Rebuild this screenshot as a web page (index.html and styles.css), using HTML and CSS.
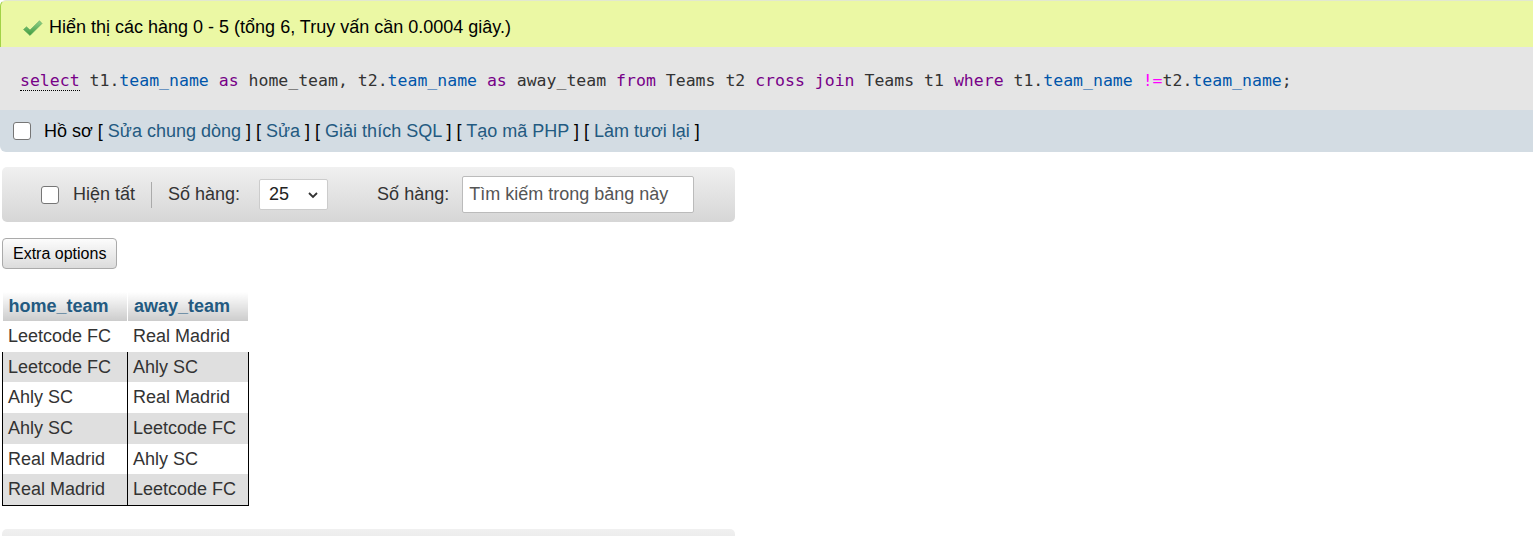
FILE: index.html
```html
<!DOCTYPE html>
<html lang="vi">
<head>
<meta charset="utf-8">
<title>SQL result</title>
<link rel="stylesheet" href="styles.css">
</head>
<body>
<div class="result">
  <div class="success">
    <svg class="check" width="21" height="18" viewBox="0 0 21 18">
      <defs>
        <linearGradient id="g" x1="0" y1="0" x2="0" y2="1">
          <stop offset="0" stop-color="#8fd08a"/>
          <stop offset="1" stop-color="#3f9a3c"/>
        </linearGradient>
      </defs>
      <path d="M1.5 10.5 L4.5 7.8 L8 11 L17.5 1.8 L20 4.5 L8 16.5 Z" fill="url(#g)" stroke="#5aa85a" stroke-width="0.6" stroke-linejoin="round"/>
    </svg>
    <span>Hiển thị các hàng 0 - 5 (tổng 6, Truy vấn cần 0.0004 giây.)</span>
  </div>
  <div class="sql"><code><span class="kw kw-u">select</span> t1.<span class="v">team_name</span> <span class="kw">as</span> home_team, t2.<span class="v">team_name</span> <span class="kw">as</span> away_team <span class="kw">from</span> Teams t2 <span class="kw">cross</span> <span class="kw">join</span> Teams t1 <span class="kw">where</span> t1.<span class="v">team_name</span> <span class="op">!=</span>t2.<span class="v">team_name</span>;</code></div>
  <div class="tools">
    <span class="box"></span>
    <span class="lbl">Hồ sơ</span>
    <span class="links">[ <a>Sửa chung dòng</a> ] [ <a>Sửa</a> ] [ <a>Giải thích SQL</a> ] [ <a>Tạo mã PHP</a> ] [ <a>Làm tươi lại</a> ]</span>
  </div>
</div>

<div class="navbar">
  <span class="box"></span>
  <span class="nlbl">Hiện tất</span>
  <span class="sep"></span>
  <span class="nlbl">Số hàng:</span>
  <span class="select">25
    <svg width="12" height="8" viewBox="0 0 12 8"><path d="M2 2 L6 6 L10 2" fill="none" stroke="#333" stroke-width="1.8"/></svg>
  </span>
  <span class="nlbl gap">Số hàng:</span>
  <span class="input">Tìm kiếm trong bảng này</span>
</div>

<div class="extra"><span class="btn">Extra options</span></div>

<table class="data">
  <thead>
    <tr><th class="c1">home_team</th><th class="c2">away_team</th></tr>
  </thead>
  <tbody>
    <tr class="odd first"><td>Leetcode FC</td><td>Real Madrid</td></tr>
    <tr class="even"><td>Leetcode FC</td><td>Ahly SC</td></tr>
    <tr class="odd"><td>Ahly SC</td><td>Real Madrid</td></tr>
    <tr class="even"><td>Ahly SC</td><td>Leetcode FC</td></tr>
    <tr class="odd"><td>Real Madrid</td><td>Ahly SC</td></tr>
    <tr class="even last"><td>Real Madrid</td><td>Leetcode FC</td></tr>
  </tbody>
</table>

<div class="navbar bottom"></div>
</body>
</html>
```
FILE: styles.css
```css
html, body {
  margin: 0;
  padding: 0;
  background: #fff;
  font-family: "Liberation Sans", Arial, sans-serif;
  font-size: 18px;
  color: #333;
  overflow: hidden;
}

.result {
  width: 100%;
}

.success {
  height: 47px;
  box-sizing: border-box;
  background: #ebf8a4;
  border-left: 1px solid #a2d246;
  border-top: 1px solid #e2e8d0;
  border-top-left-radius: 6px;
  display: flex;
  align-items: center;
  padding-left: 21px;
  padding-top: 6px;
  color: #000;
  font-size: 18px;
}
.success .check {
  margin-right: 6px;
  margin-top: 2px;
}

.sql {
  height: 63px;
  background: #e5e5e5;
  box-sizing: border-box;
  padding: 23px 0 0 20px;
}
.sql code {
  font-family: "DejaVu Sans Mono", "Liberation Mono", monospace;
  font-size: 16.5px;
  color: #333;
  white-space: pre;
}
.kw { color: #708; }
.kw-u { border-bottom: 1px dotted #000; }
.v { color: #05a; }
.op { color: #f0f; }

.tools {
  height: 42px;
  background: #d3dce3;
  border-bottom-left-radius: 6px;
  display: flex;
  align-items: center;
  padding-left: 13px;
  color: #000;
  font-size: 18px;
}
.box {
  width: 16px;
  height: 16px;
  border: 1px solid #767676;
  border-radius: 3px;
  background: #fff;
  display: inline-block;
  flex: none;
}
.tools .lbl {
  margin-left: 13px;
  margin-right: 5px;
}
.links a { color: #235a81; }

.navbar {
  margin: 15px 0 0 2px;
  width: 733px;
  height: 55px;
  box-sizing: border-box;
  border-radius: 5px;
  background: linear-gradient(#f0f0f0, #d6d6d6);
  display: flex;
  align-items: center;
  padding-left: 39px;
  color: #333;
}
.navbar .box { margin-right: 14px; }
.nlbl { font-size: 18px; }
.sep {
  width: 1px;
  height: 26px;
  background: #aaa;
  margin: 0 16px;
}
.select {
  margin-left: 19px;
  width: 69px;
  height: 31px;
  box-sizing: border-box;
  background: #fff;
  border: 1px solid #ccc;
  border-radius: 2px;
  display: flex;
  align-items: center;
  justify-content: space-between;
  padding: 0 8px 0 9px;
  color: #222;
}
.gap { margin-left: 49px; }
.input {
  margin-left: 13px;
  width: 232px;
  height: 37px;
  box-sizing: border-box;
  background: #fff;
  border: 1px solid #bbb;
  border-radius: 2px;
  display: flex;
  align-items: center;
  padding-left: 6px;
  color: #555;
}

.extra {
  margin: 16px 0 0 2px;
  display: flex;
}
.btn {
  height: 31px;
  box-sizing: border-box;
  padding: 0 10px;
  display: flex;
  align-items: center;
  border: 1px solid #aaa;
  border-radius: 4px;
  background: linear-gradient(#fcfcfc, #dcdcdc);
  color: #000;
  font-size: 16px;
}

table.data {
  margin: 23px 0 0 2px;
  border-collapse: collapse;
  font-size: 18px;
  table-layout: fixed;
}
table.data th {
  height: 29px;
  padding: 0 6px;
  box-sizing: border-box;
  text-align: left;
  color: #235a81;
  font-weight: bold;
  background: linear-gradient(#fff, #ccc);
  border-right: 1px solid #fff;
}
table.data th.c1 { width: 125px; }
table.data th.c2 { width: 121px; }
table.data td {
  height: 30.7px;
  padding: 0 5px;
  box-sizing: border-box;
  color: #333;
  border-left: 1px solid #000;
  border-right: 1px solid #000;
  white-space: nowrap;
}
table.data tr.first td {
  border-left-color: transparent;
  border-right-color: transparent;
}
table.data tr.odd td { background: #fff; }
table.data tr.even td { background: #dfdfdf; }
table.data tr.last td { border-bottom: 1px solid #000; }

.navbar.bottom {
  margin-top: 23px;
}
```
